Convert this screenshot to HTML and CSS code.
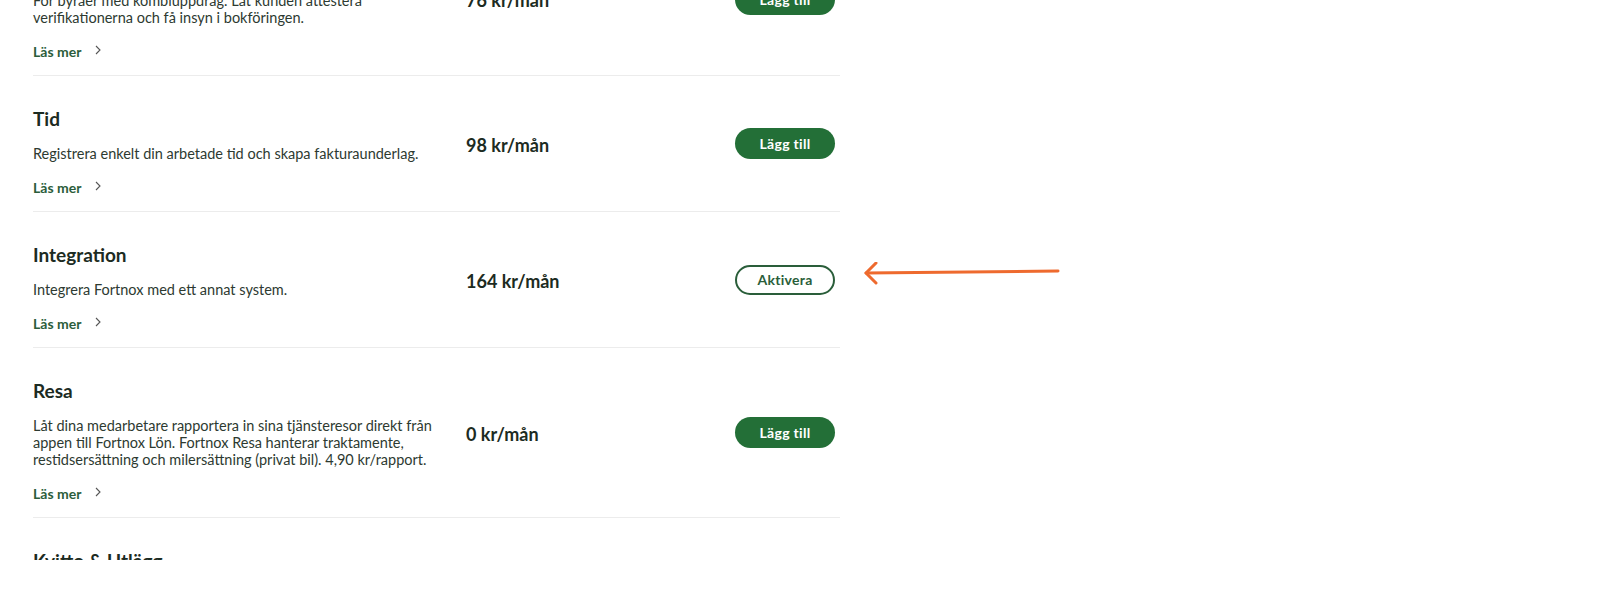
FILE: index.html
```html
<!DOCTYPE html>
<html lang="sv">
<head>
<meta charset="utf-8">
<title>Tillägg</title>
<link rel="stylesheet" href="styles.css">
</head>
<body>
<div class="viewport">
  <ul class="addon-list">
    <li class="addon">
      <div class="addon-info">
        <h3 class="addon-title">Attest</h3>
        <p class="addon-desc">För byråer med kombiuppdrag. Låt kunden attestera verifikationerna och få insyn i bokföringen.</p>
        <a class="read-more" href="#">Läs mer <svg class="chev" width="6" height="10" viewBox="0 0 6 10"><path d="M1 1l4 4-4 4" fill="none" stroke="#555" stroke-width="1.1"/></svg></a>
      </div>
      <div class="addon-price">76 kr/mån</div>
      <button class="btn btn-add">Lägg till</button>
    </li>
    <li class="addon">
      <div class="addon-info">
        <h3 class="addon-title">Tid</h3>
        <p class="addon-desc">Registrera enkelt din arbetade tid och skapa fakturaunderlag.</p>
        <a class="read-more" href="#">Läs mer <svg class="chev" width="6" height="10" viewBox="0 0 6 10"><path d="M1 1l4 4-4 4" fill="none" stroke="#555" stroke-width="1.1"/></svg></a>
      </div>
      <div class="addon-price">98 kr/mån</div>
      <button class="btn btn-add">Lägg till</button>
    </li>
    <li class="addon">
      <div class="addon-info">
        <h3 class="addon-title">Integration</h3>
        <p class="addon-desc">Integrera Fortnox med ett annat system.</p>
        <a class="read-more" href="#">Läs mer <svg class="chev" width="6" height="10" viewBox="0 0 6 10"><path d="M1 1l4 4-4 4" fill="none" stroke="#555" stroke-width="1.1"/></svg></a>
      </div>
      <div class="addon-price">164 kr/mån</div>
      <button class="btn btn-activate">Aktivera</button>
    </li>
    <li class="addon">
      <div class="addon-info">
        <h3 class="addon-title">Resa</h3>
        <p class="addon-desc">Låt dina medarbetare rapportera in sina tjänsteresor direkt från appen till Fortnox Lön. Fortnox Resa hanterar traktamente, restidsersättning och milersättning (privat bil). 4,90 kr/rapport.</p>
        <a class="read-more" href="#">Läs mer <svg class="chev" width="6" height="10" viewBox="0 0 6 10"><path d="M1 1l4 4-4 4" fill="none" stroke="#555" stroke-width="1.1"/></svg></a>
      </div>
      <div class="addon-price">0 kr/mån</div>
      <button class="btn btn-add">Lägg till</button>
    </li>
    <li class="addon">
      <div class="addon-info">
        <h3 class="addon-title">Kvitto &amp; Utlägg</h3>
        <p class="addon-desc">Fotografera kvitton och rapportera utlägg direkt i appen.</p>
        <a class="read-more" href="#">Läs mer <svg class="chev" width="6" height="10" viewBox="0 0 6 10"><path d="M1 1l4 4-4 4" fill="none" stroke="#555" stroke-width="1.1"/></svg></a>
      </div>
      <div class="addon-price">0 kr/mån</div>
      <button class="btn btn-add">Lägg till</button>
    </li>
  </ul>
  <!-- pointer arrow annotation next to the Aktivera button -->
  <svg class="pointer" width="200" height="30" viewBox="0 0 200 30">
    <path d="M194 9 L2 11" fill="none" stroke="#ee6a2e" stroke-width="3" stroke-linecap="round"/>
    <path d="M12 1 L2 11 L12 21" fill="none" stroke="#ee6a2e" stroke-width="3" stroke-linecap="round" stroke-linejoin="round"/>
  </svg>
</div>
</body>
</html>
```

FILE: styles.css
```css
* { box-sizing: border-box; }

html, body {
  margin: 0;
  padding: 0;
  background: #ffffff;
}

body {
  font-family: Lato, "Noto Sans", sans-serif;
  color: #1c2b22;
}

.viewport {
  position: relative;
  height: 560px;
  overflow: hidden;
}

.addon-list {
  list-style: none;
  margin: -78px 0 0 33px;
  padding: 0;
  width: 807px;
}

.addon {
  display: grid;
  grid-template-columns: 410px 1fr auto;
  column-gap: 23px;
  align-items: center;
  padding-right: 5px;
  border-top: 1px solid #ececec;
}

.addon-info {
  display: flex;
  flex-direction: column;
  align-items: flex-start;
  padding: 31px 0 15px;
}

.addon-title {
  margin: 0;
  font-size: 19px;
  line-height: 24px;
  font-weight: 700;
  color: #1c2b22;
}

.addon-desc {
  margin: 14px 0 0;
  font-size: 14.5px;
  line-height: 17px;
  color: #2d3a31;
}

.read-more {
  margin-top: 17px;
  display: inline-flex;
  align-items: center;
  gap: 14px;
  font-size: 14px;
  line-height: 17px;
  font-weight: 700;
  color: #2b5d3b;
  text-decoration: none;
}

.chev { display: block; margin-top: -3px; }

.addon-price {
  font-size: 18px;
  font-weight: 700;
  color: #1c2b22;
  padding-top: 2px;
}

.btn {
  width: 100px;
  height: 31px;
  border-radius: 16px;
  font-family: inherit;
  font-size: 14px;
  letter-spacing: 0.3px;
  font-weight: 700;
  cursor: pointer;
}

.btn-add {
  background: #236f37;
  border: none;
  color: #ffffff;
}

.btn-activate {
  background: #ffffff;
  border: 2px solid #2a5e3a;
  color: #2a5e3a;
  height: 30px;
}

.pointer {
  position: absolute;
  left: 864px;
  top: 262px;
}
```
